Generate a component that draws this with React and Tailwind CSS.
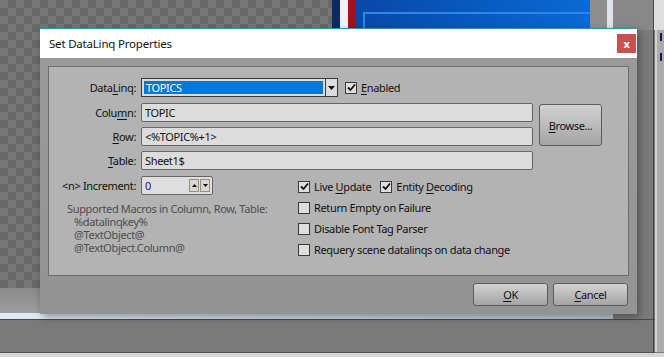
import React from 'react';

const font = { fontFamily: '"Noto Sans", "Open Sans", sans-serif' };

function CheckBox({ checked, label }) {
  return (
    <div className="flex items-center h-[21px]">
      <div className="w-[12px] h-[12px] border border-[#3a3a3a] bg-[#dedede] flex items-center justify-center">
        {checked && (
          <svg width="9" height="9" viewBox="0 0 9 9">
            <path d="M1 4.5 L3.5 7 L8 1.5" fill="none" stroke="#111" strokeWidth="1.8" />
          </svg>
        )}
      </div>
      <span className="ml-[4px] text-[#111]">{label}</span>
    </div>
  );
}

function Btn({ children, className = '' }) {
  return (
    <div className={`flex items-center justify-center rounded-[3px] border border-[#5c5c5c] bg-gradient-to-b from-[#d2d2d2] to-[#a4a4a4] text-[#111] ${className}`}>
      {children}
    </div>
  );
}

function Field({ value }) {
  return (
    <div className="h-[19px] w-[392px] rounded-[2px] border border-[#666] bg-[#dcdcdc] pl-[3px] flex items-center text-[#111]">
      {value}
    </div>
  );
}

function Label({ children }) {
  return <div className="w-[92px] pr-[5px] text-right text-[#111]">{children}</div>;
}

export default function App() {
  return (
    <div className="relative w-[664px] h-[357px] overflow-hidden bg-[#7a7a7a] text-[11px] leading-none tracking-[-0.35px]" style={font}>
      {/* desktop behind the dialog */}
      <div className="absolute left-0 top-0 w-[332px] h-[288px] bg-[repeating-conic-gradient(#686868_0_25%,#777777_0_50%)] bg-[length:16px_16px]" />
      <div className="absolute left-0 top-[288px] w-[613px] h-[25px] bg-gradient-to-b from-[#8a8a8a] to-[#9e9e9e]" />
      <div className="absolute left-0 top-[313px] w-[613px] h-[6px] bg-gradient-to-r from-[#e2ebf5] to-[#bcc6d0]" />
      <div className="absolute left-0 top-[319px] w-[655px] h-[1px] bg-[#4a4a4a]" />
      <div className="absolute left-0 top-[352px] w-[655px] h-[1px] bg-[#555]" />
      <div className="absolute left-0 top-[353px] w-[664px] h-[4px] bg-[#d6d6d6]" />

      {/* blue window at top */}
      <div className="absolute left-[332px] top-0 w-[258px] h-[40px] flex">
        <div className="w-[8px] bg-[#0b2a66]" />
        <div className="w-[8px] bg-[#f2f2f2]" />
        <div className="w-[8px] bg-[#a3121a]" />
        <div className="flex-1 bg-gradient-to-r from-[#0848a8] to-[#0a6ad4] pl-[7px] pt-[12px]">
          <div className="h-full border-l-2 border-t-2 border-[#2e86e8]" />
        </div>
      </div>
      <div className="absolute left-[590px] top-0 w-[17px] h-[30px] bg-[#8e8e8e]" />
      <div className="absolute left-[607px] top-0 w-[6px] h-[30px] bg-[#dde4ec]" />
      <div className="absolute left-[613px] top-0 w-[40px] h-[30px] bg-[#888]" />
      <div className="absolute left-[653px] top-0 w-[1px] h-[353px] bg-[#444]" />
      <div className="absolute left-[654px] top-0 w-[10px] h-[30px] bg-[#dedede]" />
      <div className="absolute left-[655px] top-[30px] w-[2px] h-[322px] bg-[#d2d2d2]" />
      <div className="absolute left-[657px] top-[30px] w-[7px] h-[322px] bg-[#acacac]" />
      <div className="absolute left-[660px] top-[33px] w-[2px] h-[8px] bg-[#1a1a4a]" />
      <div className="absolute left-[660px] top-[53px] w-[2px] h-[8px] bg-[#1a1a4a]" />

      {/* dialog */}
      <div className="absolute left-[40px] top-[28px] w-[597px] flex flex-col shadow-[2px_3px_8px_rgba(0,0,0,0.35)]">
        <div className="h-[30px] bg-white border-t border-[#3a8fae] flex items-center pl-[9px] pr-[1px]">
          <span className="flex-1 text-[11.5px] tracking-[-0.2px] text-[#111]">Set DataLinq Properties</span>
          <div className="w-[19px] h-[19px] bg-[#c75050] text-white font-bold flex items-center justify-center text-[11px]">x</div>
        </div>
        <div className="h-[256px] bg-gradient-to-b from-[#9a9a9a] to-[#939393] px-[8px] pt-[8px]">
          <div className="h-[210px] border border-[#6e6e6e] bg-[#b3b3b3] pt-[11px]">
            <div className="flex items-center h-[19px]">
              <Label>
                Data<u className="underline-offset-2">L</u>inq:
              </Label>
              <div className="w-[197px] h-[19px] border border-[#3a3a3a] bg-[#dcdcdc] flex">
                <div className="flex-1 m-[2px] bg-[#0078d7] text-white flex items-center pl-[2px]">TOPICS</div>
                <div className="w-[12px] border-l border-[#3a3a3a] flex items-center justify-center">
                  <svg width="7" height="4" viewBox="0 0 7 4">
                    <path d="M0 0 H7 L3.5 4 Z" fill="#111" />
                  </svg>
                </div>
              </div>
              <div className="ml-[7px]">
                <CheckBox checked label={<><u className="underline-offset-2">E</u>nabled</>} />
              </div>
            </div>

            <div className="flex mt-[6px]">
              <div className="flex flex-col gap-[5px]">
                <div className="flex items-center">
                  <Label>
                    Colu<u className="underline-offset-2">m</u>n:
                  </Label>
                  <Field value="TOPIC" />
                </div>
                <div className="flex items-center">
                  <Label>
                    <u className="underline-offset-2">R</u>ow:
                  </Label>
                  <Field value="<%TOPIC%+1>" />
                </div>
                <div className="flex items-center">
                  <Label>
                    <u className="underline-offset-2">T</u>able:
                  </Label>
                  <Field value="Sheet1$" />
                </div>
              </div>
              <Btn className="ml-[6px] mt-[1px] w-[63px] h-[42px]">
                <span>
                  <u className="underline-offset-2">B</u>rowse...
                </span>
              </Btn>
            </div>

            <div className="flex mt-[6px]">
              <div className="w-[249px]">
                <div className="flex items-center h-[19px]">
                  <Label>&lt;n&gt; Increment:</Label>
                  <div className="w-[72px] h-[19px] rounded-[2px] border border-[#666] bg-[#dedede] flex items-center pl-[3px] pr-[2px]">
                    <span className="flex-1 text-[#2a1660]">0</span>
                    <div className="w-[10px] h-[13px] border border-[#9a9078] bg-[#d8d8d8] flex items-center justify-center">
                      <svg width="5" height="3" viewBox="0 0 5 3"><path d="M0 3 H5 L2.5 0 Z" fill="#111" /></svg>
                    </div>
                    <div className="ml-[1px] w-[10px] h-[13px] border border-[#9a9078] bg-[#d8d8d8] flex items-center justify-center">
                      <svg width="5" height="3" viewBox="0 0 5 3"><path d="M0 0 H5 L2.5 3 Z" fill="#111" /></svg>
                    </div>
                  </div>
                </div>
                <div className="mt-[7px] pl-[18px] text-[#4d4d4d] leading-[13px]">
                  <div>Supported Macros in Column, Row, Table:</div>
                  <div className="pl-[7px]">%datalinqkey%</div>
                  <div className="pl-[7px]">@TextObject@</div>
                  <div className="pl-[7px]">@TextObject.Column@</div>
                </div>
              </div>
              <div className="flex flex-col">
                <div className="flex gap-[9px]">
                  <CheckBox checked label={<>Live <u className="underline-offset-2">U</u>pdate</>} />
                  <CheckBox checked label={<>Entity <u className="underline-offset-2">D</u>ecoding</>} />
                </div>
                <CheckBox label="Return Empty on Failure" />
                <CheckBox label="Disable Font Tag Parser" />
                <CheckBox label="Requery scene datalinqs on data change" />
              </div>
            </div>
          </div>
          <div className="flex justify-end gap-[5px] pr-[1px] mt-[7px]">
            <Btn className="w-[75px] h-[23px]">
              <span><u className="underline-offset-2">O</u>K</span>
            </Btn>
            <Btn className="w-[75px] h-[23px]">
              <span><u className="underline-offset-2">C</u>ancel</span>
            </Btn>
          </div>
        </div>
      </div>
    </div>
  );
}
